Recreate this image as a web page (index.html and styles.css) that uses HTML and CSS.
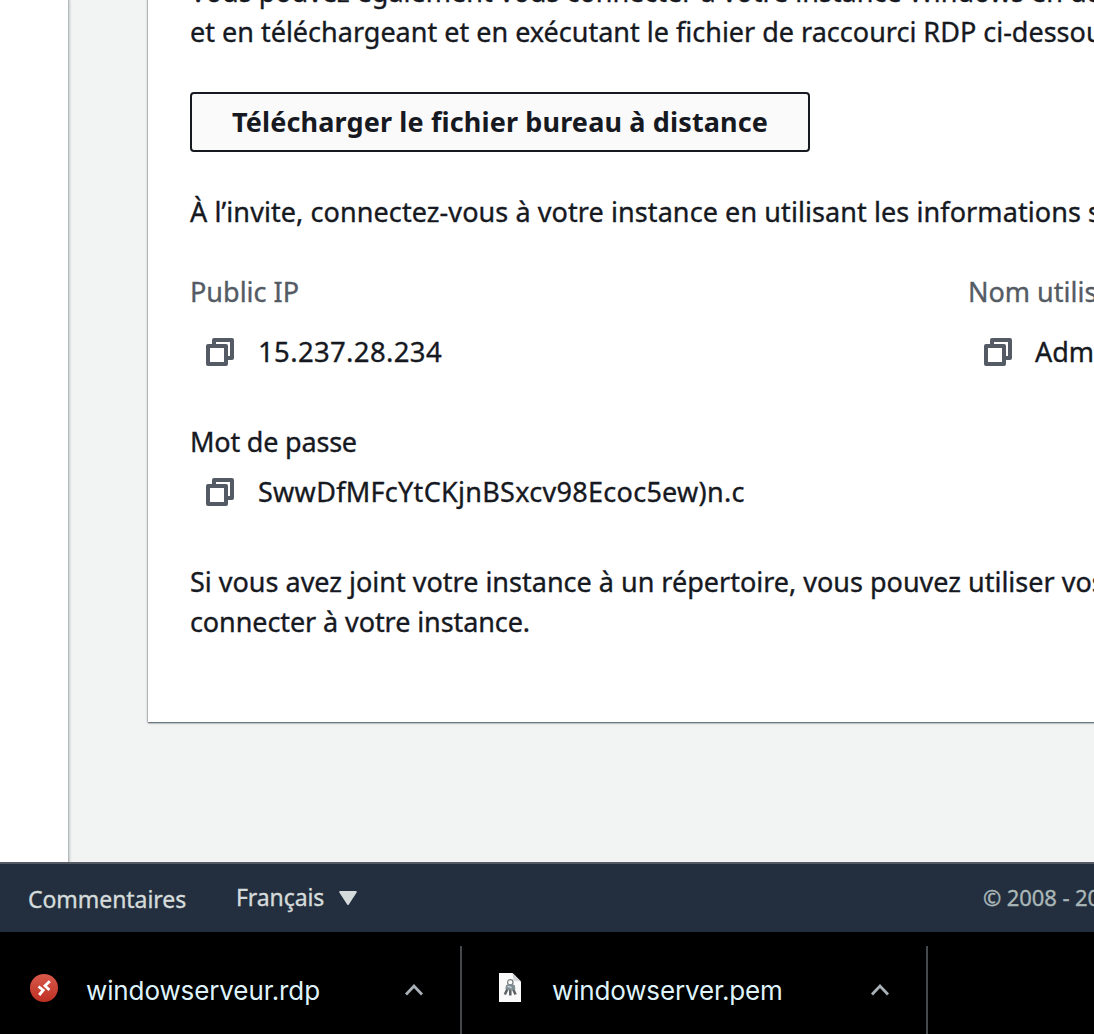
FILE: index.html
```html
<!DOCTYPE html>
<html lang="fr">
<head>
<meta charset="utf-8">
<title>Se connecter à l’instance</title>
<link rel="stylesheet" href="styles.css">
</head>
<body>
<svg width="0" height="0" class="defs">
  <symbol id="copy" viewBox="0 0 28 28">
    <g fill="none" stroke="#545b64" stroke-width="4" stroke-linejoin="round">
      <path d="M8 7V2H26V20H21"/>
      <rect x="2" y="8" width="18" height="18"/>
    </g>
  </symbol>
  <symbol id="chevron" viewBox="0 0 20 14">
    <path d="M2 11.5 10 3 18 11.5" fill="none" stroke="#a9b0b7" stroke-width="2.8"/>
  </symbol>
</svg>
<div class="workspace">
  <aside class="sidebar"></aside>
  <main class="content">
    <section class="card">
      <p class="intro">Vous pouvez également vous connecter à votre instance Windows en utilisant un client<br>et en téléchargeant et en exécutant le fichier de raccourci RDP ci-dessous :</p>
      <button class="download">Télécharger le fichier bureau à distance</button>
      <p class="prompt">À l’invite, connectez-vous à votre instance en utilisant les informations suivantes :</p>
      <div class="details">
        <div class="pair">
          <div class="label">Public IP</div>
          <div class="value"><svg class="copy"><use href="#copy"/></svg><span class="ip">15.237.28.234</span></div>
        </div>
        <div class="pair">
          <div class="label">Nom utilisateur</div>
          <div class="value"><svg class="copy"><use href="#copy"/></svg><span class="user">Administrator</span></div>
        </div>
      </div>
      <div class="password">
        <div class="password-label">Mot de passe</div>
        <div class="value"><svg class="copy"><use href="#copy"/></svg><span class="secret">SwwDfMFcYtCKjnBSxcv98Ecoc5ew)n.c</span></div>
      </div>
      <p class="note">Si vous avez joint votre instance à un répertoire, vous pouvez utiliser vos informations<br><span class="note-end">connecter à votre instance.</span></p>
    </section>
  </main>
</div>
<footer class="footer">
  <span class="feedback">Commentaires</span>
  <span class="language">Français</span>
  <svg class="caret" viewBox="0 0 18 14"><path d="M1.2 1H16.8L9 13Z" fill="#d5dbdb" stroke="#d5dbdb" stroke-width="2" stroke-linejoin="round"/></svg>
  <span class="copyright">© 2008 - 2021</span>
</footer>
<div class="shelf">
  <div class="file">
    <svg class="rdp" viewBox="0 0 28 28">
      <defs><linearGradient id="red" x2="0" y2="1"><stop stop-color="#d9594b"/><stop offset="1" stop-color="#bd3022"/></linearGradient></defs>
      <circle cx="14" cy="14" r="14" fill="url(#red)"/>
      <path d="M8.5 12.5 13.2 16.2 9.2 21M19.8 7.2 15 11.8 19.4 16" fill="none" stroke="#fff" stroke-width="2.8"/>
    </svg>
    <span class="filename">windowserveur.rdp</span>
    <svg class="chevron"><use href="#chevron"/></svg>
  </div>
  <div class="file file-pem">
    <svg class="pem" viewBox="0 0 22 29">
      <path d="M0 0H13.5L22 8.5V29H0Z" fill="#fafafa"/>
      <path d="M13.5 0 14.5 7.5 22 8.5Z" fill="#d2d4d5"/>
      <circle cx="11.3" cy="9.3" r="2.7" fill="none" stroke="#777d7f" stroke-width="1.2"/>
      <g fill="none" stroke="#5b5f61" stroke-width="2.5"><path d="M9 15 5.8 21.5"/><path d="M11.3 15V22.5"/><path d="M13.5 15 16.6 21.5"/></g>
      <path d="M7 12.3Q11.4 9.8 15.8 12.3L16.4 16.2Q11.5 18.2 6.4 16.2Z" fill="#7f8c91"/>
      <path d="M8.5 13.3 12.8 14.8" stroke="#bdcdd3" stroke-width="1.5"/>
    </svg>
    <span class="filename filename-pem">windowserver.pem</span>
    <svg class="chevron"><use href="#chevron"/></svg>
  </div>
</div>
</body>
</html>
```
FILE: styles.css
```css
* { box-sizing: border-box; }
html, body { height: 100%; overflow: hidden; }
body {
  margin: 0;
  display: flex;
  flex-direction: column;
  background: #fff;
  color: #16191f;
  font: 400 27px/40px "Noto Sans", sans-serif;
  white-space: nowrap;
}
p { margin: 0; }
svg { display: block; flex: none; }
.defs { position: absolute; }
.workspace { height: 862px; flex: none; display: flex; background: #f2f3f3; overflow: hidden; }
.sidebar { width: 69px; flex: none; background: #fff; border-right: 1px solid #b4bbbd; box-shadow: 1px 0 2px rgba(0, 28, 36, .2); }
.content { padding-left: 79px; flex: none; }
.card {
  width: 1600px;
  height: 750px;
  margin-top: -28px;
  padding: 0 42px;
  background: #fff;
  box-shadow: 0 1px 2px rgba(0, 28, 36, .5), 0 1px 1px rgba(0, 28, 36, .25), 0 0 2px rgba(0, 28, 36, .3);
  -webkit-text-stroke: .35px currentColor;
}
.download {
  display: block;
  width: 620px;
  height: 60px;
  margin: 40px 0;
  padding: 0 0 1px;
  border: 2px solid #16191f;
  border-radius: 4px;
  background: #fafafa;
  color: #16191f;
  font: 700 27px/40px "Noto Sans", sans-serif;
  letter-spacing: .14px;
  -webkit-text-stroke: 0;
}
.prompt { letter-spacing: .085px; }
.details { display: grid; grid-template-columns: 778px 1fr; margin-top: 40px; }
.label { color: #545b64; margin-bottom: 20px; }
.value { display: flex; align-items: center; height: 40px; padding-left: 16px; gap: 24px; }
.copy { width: 28px; height: 28px; }
.ip { font-size: 27.5px; letter-spacing: .35px; }
.user { margin-left: -1px; }
.password { margin-top: 50px; }
.password-label { margin-bottom: 10px; letter-spacing: -.2px; }
.secret { letter-spacing: .29px; }
.note { margin-top: 50px; }
.note-end { letter-spacing: -.09px; }
.footer {
  height: 70px;
  flex: none;
  display: flex;
  align-items: center;
  padding-left: 28px;
  border-top: 2px solid #545b64;
  background: #232f3e;
  color: #d5dbdb;
  font-size: 23px;
  -webkit-text-stroke: .35px currentColor;
}
.footer > * { flex: none; }
.feedback { width: 208px; padding-top: 2px; letter-spacing: -.05px; }
.language { width: 103px; padding-bottom: 2px; letter-spacing: -.1px; }
.caret { width: 18px; height: 14px; }
.copyright { margin-left: 626px; padding-bottom: 2px; color: #aab7b8; font-size: 22px; letter-spacing: -.1px; }
.shelf {
  flex: 1;
  display: flex;
  padding-top: 14px;
  background: #000;
  color: #dff3fb;
  font: 400 26px/40px Inter, sans-serif;
  letter-spacing: -.11px;
}
.file { width: 462px; flex: none; display: flex; align-items: center; padding-left: 30px; border-right: 2px solid #46494c; }
.file-pem { width: 466px; padding-left: 37px; }
.rdp { width: 28px; height: 28px; margin: -5px 28px 0 0; }
.pem { width: 22px; height: 29px; margin: -5px 31px 0 0; }
.filename { width: 318px; padding-top: 1px; }
.filename-pem { letter-spacing: -.15px; }
.chevron { width: 20px; height: 14px; }
```
